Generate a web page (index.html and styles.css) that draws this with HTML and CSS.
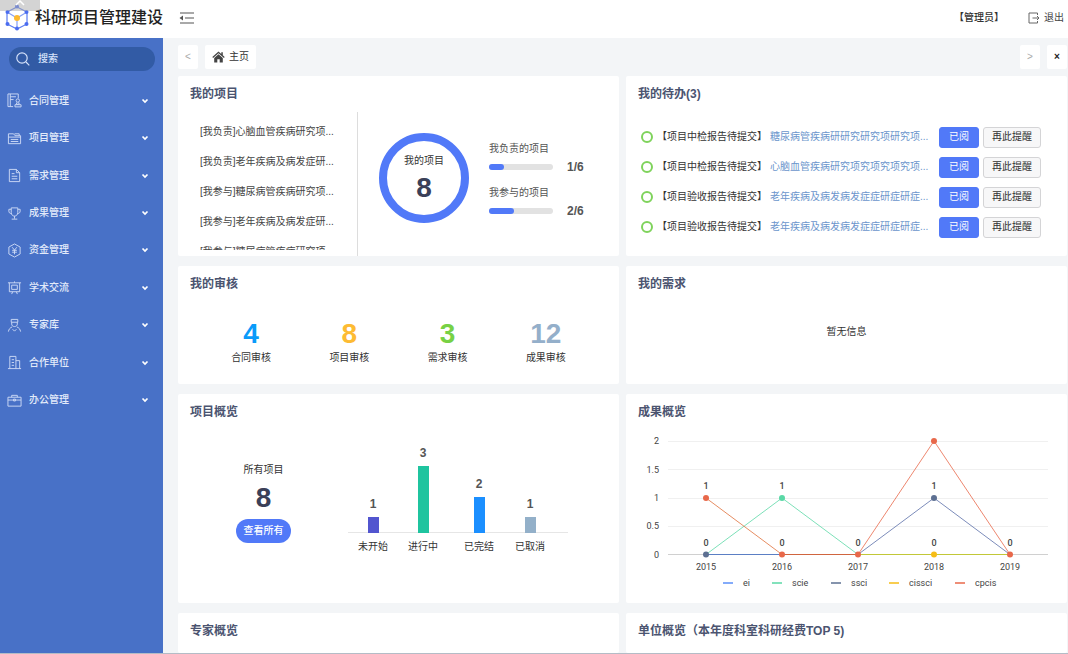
FILE: index.html
```
<!DOCTYPE html>
<html lang="zh-CN">
<head>
    <meta charset="UTF-8">
    <meta name="viewport" content="width=device-width, initial-scale=1.0">
    <title>科研项目管理建设</title>
    <link rel="stylesheet" href="styles.css">
</head>
<body>
    <header class="header">
        <svg class="logo" width="24" height="27" viewBox="0 0 24 27">
            <g fill="none" stroke="#5b7cf0" stroke-width="1.2">
                <path d="M12 3 L22 8 V20 L12 25 L2 20 V8 Z"/>
                <path d="M12 14 V25 M2 8 L12 14 L22 8" stroke="#86a0f5"/>
            </g>
            <g fill="#4a6cf0">
                <circle cx="12" cy="2.5" r="2"/><circle cx="2.5" cy="8" r="2"/><circle cx="21.5" cy="8" r="2"/>
                <circle cx="2.5" cy="20" r="2"/><circle cx="21.5" cy="20" r="2"/><circle cx="12" cy="24.5" r="2"/>
            </g>
            <circle cx="12" cy="14" r="3" fill="#fdb92c"/>
        </svg>
        <h1 class="site-name">科研项目管理建设</h1>
        <button class="icon-button fold" aria-label="收起菜单">
            <svg width="15" height="12" viewBox="0 0 15 12" fill="none" stroke="#555" stroke-width="1.2">
                <path d="M1 1H15 M6 6H15 M1 11H15"/><path d="M4 3.500 L0.500 6 L4 8.500 Z" fill="#555" stroke="none"/>
            </svg>
        </button>
        <span class="user">【管理员】</span>
        <a href="#" class="logout">
            <svg width="12" height="12" viewBox="0 0 12 12" fill="none" stroke="#666" stroke-width="1">
                <path d="M9.500 3V1H1V11H9.500V9 M4.500 6H11 M9 4L11 6L9 8"/>
            </svg>
            退出
        </a>
        <span class="pull-tab">
            <svg width="10" height="6" viewBox="0 0 10 6" fill="none" stroke="#fff" stroke-width="1.500"><path d="M1 5L5 1L9 5"/></svg>
        </span>
    </header>

    <div class="layout">
        <nav class="sidebar">
            <label class="search">
                <svg width="14" height="14" viewBox="0 0 14 14" fill="none" stroke="#d5e2fa" stroke-width="1.2"><circle cx="6" cy="6" r="5.200"/><path d="M10 10L13.300 13.300"/></svg>
                <input type="text" placeholder="搜索" aria-label="搜索">
            </label>
            <ul class="menu">
                <li><a href="#"><svg class="menu-icon" viewBox="0 0 16 16"><path d="M6.500 14.500H1V1H12V5.500 M3.500 4H9.500 M3.500 7H7 M3.500 1V14.500"/><circle cx="11.500" cy="8" r="1.800"/><path d="M10.500 10L10 12H13L12.500 10 M8.500 14.800V12.500H15V14.800Z"/></svg>合同管理<svg class="arrow" viewBox="0 0 8 6"><path d="M1.500 1.500L4 4L6.500 1.500"/></svg></a></li>
                <li><a href="#"><svg class="menu-icon" viewBox="0 0 16 16"><path d="M1.500 13.500V3H7L8.500 5H14.500V13.500Z M1.500 6.500H14.500 M4 9H12 M4 11.200H12 M8 3H13V5"/></svg>项目管理<svg class="arrow" viewBox="0 0 8 6"><path d="M1.500 1.500L4 4L6.500 1.500"/></svg></a></li>
                <li><a href="#"><svg class="menu-icon" viewBox="0 0 16 16"><path d="M2.500 1.500H10L13.500 5V14.500H2.500Z M10 1.500V5H13.500 M5 6H8 M5 8.800H11 M5 11.500H11"/></svg>需求管理<svg class="arrow" viewBox="0 0 8 6"><path d="M1.500 1.500L4 4L6.500 1.500"/></svg></a></li>
                <li><a href="#"><svg class="menu-icon" viewBox="0 0 16 16"><path d="M4.500 2H11.500V7C11.500 12 4.500 12 4.500 7Z M4.500 3.500H2V5.500C2 7 3 8 4.500 8 M11.500 3.500H14V5.500C14 7 13 8 11.500 8 M8 10.800V13.500 M5 14H11"/></svg>成果管理<svg class="arrow" viewBox="0 0 8 6"><path d="M1.500 1.500L4 4L6.500 1.500"/></svg></a></li>
                <li><a href="#"><svg class="menu-icon" viewBox="0 0 16 16"><path d="M8 1L14 4.300V11.700L8 15L2 11.700V4.300Z M5.500 4.500L8 7.500L10.500 4.500 M5.500 7.800H10.500 M5.500 9.800H10.500 M8 7.500V12"/></svg>资金管理<svg class="arrow" viewBox="0 0 8 6"><path d="M1.500 1.500L4 4L6.500 1.500"/></svg></a></li>
                <li><a href="#"><svg class="menu-icon" viewBox="0 0 16 16"><path d="M1 3H15 M2.500 3V12.500H13.500V3 M5 5.500H11V10H5Z M8 1.500V3 M6 12.500L5 15 M10 12.500L11 15"/></svg>学术交流<svg class="arrow" viewBox="0 0 8 6"><path d="M1.500 1.500L4 4L6.500 1.500"/></svg></a></li>
                <li><a href="#"><svg class="menu-icon" viewBox="0 0 16 16"><path d="M4.500 4.500V1.500H11.500V4.500Z M5 4.500V6.500C5 10 11 10 11 6.500V4.500 M5.500 9.500C3 10.500 2 12 1.500 14.500 M10.500 9.500C13 10.500 14 12 14.500 14.500 M6 12L8 14L10 12"/></svg>专家库<svg class="arrow" viewBox="0 0 8 6"><path d="M1.500 1.500L4 4L6.500 1.500"/></svg></a></li>
                <li><a href="#"><svg class="menu-icon" viewBox="0 0 16 16"><path d="M1 14.500H15 M3 14.500V1.500H9.500V14.500 M9.500 6H13.500V14.500 M5 5H7.500 M5 8H7.500 M5 11H7.500"/></svg>合作单位<svg class="arrow" viewBox="0 0 8 6"><path d="M1.500 1.500L4 4L6.500 1.500"/></svg></a></li>
                <li><a href="#"><svg class="menu-icon" viewBox="0 0 16 16"><path d="M1 4.500H15V14H1Z M5 4.500V2.500H11V4.500 M1 7.500H15 M7 6.500H9V8.500H7Z"/></svg>办公管理<svg class="arrow" viewBox="0 0 8 6"><path d="M1.500 1.500L4 4L6.500 1.500"/></svg></a></li>
            </ul>
        </nav>

        <main class="main">
            <div class="tabs">
                <button class="tab-button">&lt;</button>
                <a href="#" class="tab-home">
                    <svg width="13" height="12" viewBox="0 0 13 12" fill="#444"><path d="M6.500 0.500L0.300 6L1.100 6.900L6.500 2.200L11.900 6.900L12.700 6L10.800 4.300V1.300H9.300V3Z"/><path d="M6.500 3.200L2.200 7V11.500H5.300V8.300H7.700V11.500H10.800V7Z"/></svg>
                    主页
                </a>
                <button class="tab-button next">&gt;</button>
                <button class="tab-button close">×</button>
            </div>

            <div class="cards">
                <section class="card">
                    <h2>我的项目</h2>
                    <div class="project-body">
                        <div class="project-list">
                            <ul>
                                <li>[我负责]心脑血管疾病研究项...</li>
                                <li>[我负责]老年疾病及病发症研...</li>
                                <li>[我参与]糖尿病管疾病研究项...</li>
                                <li>[我参与]老年疾病及病发症研...</li>
                                <li>[我参与]糖尿病管疾病研究项...</li>
                            </ul>
                        </div>
                        <div class="ring">
                            <span>我的项目</span>
                            <b class="big-number">8</b>
                        </div>
                        <div class="progress-list">
                            <span>我负责的项目</span>
                            <div class="progress-row">
                                <div class="progress"><div class="progress-bar" style="width: 24%"></div></div>
                                <b>1/6</b>
                            </div>
                            <span>我参与的项目</span>
                            <div class="progress-row">
                                <div class="progress"><div class="progress-bar" style="width: 39%"></div></div>
                                <b>2/6</b>
                            </div>
                        </div>
                    </div>
                </section>

                <section class="card">
                    <h2>我的待办(3)</h2>
                    <ul class="todo">
                        <li><i class="dot"></i><span class="tag">【项目中检报告待提交】</span><a href="#">糖尿病管疾病研研究研究项研究项...</a><button class="btn primary">已阅</button><button class="btn">再此提醒</button></li>
                        <li><i class="dot"></i><span class="tag">【项目中检报告待提交】</span><a href="#">心脑血管疾病研究项究项究项究项...</a><button class="btn primary">已阅</button><button class="btn">再此提醒</button></li>
                        <li><i class="dot"></i><span class="tag">【项目验收报告待提交】</span><a href="#">老年疾病及病发病发症症研症研症...</a><button class="btn primary">已阅</button><button class="btn">再此提醒</button></li>
                        <li><i class="dot"></i><span class="tag">【项目验收报告待提交】</span><a href="#">老年疾病及病发病发症症研症研症...</a><button class="btn primary">已阅</button><button class="btn">再此提醒</button></li>
                    </ul>
                </section>

                <section class="card">
                    <h2>我的审核</h2>
                    <div class="audit">
                        <div><b class="big-number blue">4</b>合同审核</div>
                        <div><b class="big-number orange">8</b>项目审核</div>
                        <div><b class="big-number green">3</b>需求审核</div>
                        <div><b class="big-number gray">12</b>成果审核</div>
                    </div>
                </section>

                <section class="card">
                    <h2>我的需求</h2>
                    <p class="empty">暂无信息</p>
                </section>

                <section class="card">
                    <h2>项目概览</h2>
                    <div class="overview">
                        <div class="total">
                            <span>所有项目</span>
                            <b class="big-number">8</b>
                            <button class="view-all">查看所有</button>
                        </div>
                        <div class="bar-chart">
                            <div class="bars">
                                <div class="bar-col"><b>1</b><div class="bar purple" style="height: 16px"></div></div>
                                <div class="bar-col"><b>3</b><div class="bar teal" style="height: 67px"></div></div>
                                <div class="bar-col"><b>2</b><div class="bar sky" style="height: 36px"></div></div>
                                <div class="bar-col"><b>1</b><div class="bar steel" style="height: 16px"></div></div>
                            </div>
                            <div class="bar-labels">
                                <span>未开始</span><span>进行中</span><span>已完结</span><span>已取消</span>
                            </div>
                        </div>
                    </div>
                </section>

                <section class="card">
                    <h2>成果概览</h2>
                    <svg class="line-chart" viewBox="0 0 417 168">
                        <path class="grid-line" d="M30 16.500H410 M30 44.500H410 M30 73.500H410 M30 101.500H410"/>
                        <path class="axis-line" d="M30 129.500H410"/>
                        <g class="y-labels">
                            <text x="21" y="19">2</text>
                            <text x="21" y="48">1.5</text>
                            <text x="21" y="76">1</text>
                            <text x="21" y="104">0.5</text>
                            <text x="21" y="133">0</text>
                        </g>
                        <g class="lines">
                            <path stroke="#5b7fc4" d="M68 129.500H144"/>
                            <path stroke="#d0653f" d="M144 129.500H220"/>
                            <path stroke="#c2c838" d="M220 129.500H372"/>
                        </g>
                        <g class="thin-lines">
                            <path stroke="#5ad8a6" d="M68 129.500L144 73L220 129.500"/>
                            <path stroke="#5b6fa8" d="M220 129.500L296 73L372 129.500"/>
                            <path stroke="#e0703a" d="M68 73L144 129.500"/>
                            <path stroke="#e8684a" d="M220 129.500L296 16L372 129.500"/>
                        </g>
                        <g class="points">
                            <circle cx="68" cy="73" r="3" fill="#e8684a"/>
                            <circle cx="68" cy="129.500" r="3" fill="#5d7092"/>
                            <circle cx="144" cy="73" r="3" fill="#5ad8a6"/>
                            <circle cx="144" cy="129.500" r="3" fill="#e8684a"/>
                            <circle cx="220" cy="129.500" r="3" fill="#e8684a"/>
                            <circle cx="296" cy="16" r="3" fill="#e8684a"/>
                            <circle cx="296" cy="73" r="3" fill="#5d7092"/>
                            <circle cx="296" cy="129.500" r="3" fill="#f6bd16"/>
                            <circle cx="372" cy="129.500" r="3" fill="#e8684a"/>
                        </g>
                        <g class="point-labels">
                            <text x="68" y="64">1</text>
                            <text x="144" y="64">1</text>
                            <text x="296" y="64">1</text>
                            <text x="68" y="121">0</text>
                            <text x="144" y="121">0</text>
                            <text x="220" y="121">0</text>
                            <text x="296" y="121">0</text>
                            <text x="372" y="121">0</text>
                        </g>
                        <g class="x-labels">
                            <text x="68" y="145">2015</text>
                            <text x="144" y="145">2016</text>
                            <text x="220" y="145">2017</text>
                            <text x="296" y="145">2018</text>
                            <text x="372" y="145">2019</text>
                        </g>
                        <g class="legend">
                            <path stroke="#5b8ff9" d="M85 158H95"/><text x="105" y="161">ei</text>
                            <path stroke="#5ad8a6" d="M134 158H144"/><text x="154" y="161">scie</text>
                            <path stroke="#5d7092" d="M193 158H203"/><text x="213" y="161">ssci</text>
                            <path stroke="#f6bd16" d="M251 158H261"/><text x="271" y="161">cissci</text>
                            <path stroke="#e8684a" d="M317 158H327"/><text x="337" y="161">cpcis</text>
                        </g>
                    </svg>
                </section>

                <section class="card">
                    <h2>专家概览</h2>
                </section>

                <section class="card">
                    <h2>单位概览（本年度科室科研经费TOP 5)</h2>
                </section>
            </div>
        </main>
    </div>
</body>
</html>
```

FILE: styles.css
```
* {
    box-sizing: border-box;
}

body {
    margin: 0;
    min-height: 100vh;
    display: flex;
    flex-direction: column;
    font-family: "Liberation Sans", "Noto Sans CJK SC", sans-serif;
    font-size: 10px;
    line-height: 16px;
    color: #333;
    background: #f3f5f7;
    border-bottom: 1px solid #b4bcc6;
}

h1, h2, p, ul {
    margin: 0;
    padding: 0;
}

ul {
    list-style: none;
}

a {
    color: inherit;
    text-decoration: none;
}

button, input {
    font: inherit;
    border: none;
    padding: 0;
}

button {
    cursor: pointer;
}

/* Header */
.header {
    position: relative;
    display: flex;
    align-items: center;
    height: 38px;
    padding: 0 4px 3px 5px;
    background: #fff;
}

.logo {
    margin-right: 6px;
}

.site-name {
    font-size: 16px;
    font-weight: 500;
    line-height: 24px;
    color: #222;
}

.icon-button {
    display: flex;
    background: none;
}

.fold {
    margin-left: 16px;
}

.user {
    margin-left: auto;
    font-weight: 500;
}

.logout {
    display: flex;
    align-items: center;
    gap: 4px;
    margin-left: 24px;
    color: #444;
}

.pull-tab {
    position: absolute;
    top: 0;
    left: 0;
    display: flex;
    justify-content: center;
    width: 40px;
    height: 11px;
    background: rgba(170, 170, 170, 0.5);
}

/* Sidebar */
.layout {
    flex: 1;
    display: flex;
}

.sidebar {
    flex: none;
    width: 163px;
    padding-top: 9px;
    background: #4871c7;
}

.search {
    display: flex;
    align-items: center;
    gap: 8px;
    height: 24px;
    margin: 0 8px 0 9px;
    padding: 0 7px;
    border-radius: 12px;
    background: #325ba5;
}

.search svg {
    flex: none;
}

.search input {
    width: 100%;
    min-width: 0;
    background: none;
    outline: none;
    color: #fff;
}

.search input::placeholder {
    color: #d5e2fa;
    font-weight: 500;
}

.menu {
    display: flex;
    flex-direction: column;
    height: 348px;
    padding-top: 11px;
}

.menu li {
    flex: 1;
}

.menu a {
    display: flex;
    align-items: center;
    height: 100%;
    padding: 0 14px 0 7px;
    color: #e3ebfa;
    font-weight: 500;
}

.menu-icon {
    width: 15px;
    height: 15px;
    margin-right: 7px;
    fill: none;
    stroke: #cddaf5;
    stroke-width: 1;
}

.arrow {
    width: 8px;
    height: 6px;
    margin-left: auto;
    fill: none;
    stroke: #fff;
    stroke-width: 1.7;
}

/* Tabs */
.main {
    flex: 1;
    min-width: 0;
    display: flex;
    flex-direction: column;
    padding: 7px 1px 0 15px;
}

.tabs {
    display: flex;
    gap: 7px;
    height: 24px;
    margin-bottom: 7px;
}

.tab-button {
    width: 20px;
    border-radius: 2px;
    background: #fff;
    color: #aaa;
}

.tab-home {
    display: flex;
    align-items: center;
    gap: 4px;
    padding: 0 7px;
    border-radius: 2px;
    background: #fff;
}

.next {
    margin-left: auto;
}

.close {
    color: #222;
    font-weight: bold;
}

/* Cards */
.cards {
    flex: 1;
    display: grid;
    grid-template-columns: 1fr 1fr;
    grid-template-rows: 180px 118px 209px 1fr;
    gap: 10px 7px;
}

.card {
    display: flex;
    flex-direction: column;
    min-width: 0;
    padding: 10px 12px 0;
    border-radius: 2px;
    background: #fff;
}

.card h2 {
    font-size: 12px;
    line-height: 16px;
    color: #4b5470;
}

.big-number {
    font-size: 28px;
    line-height: 32px;
    color: #3b4058;
}

.project-body {
    flex: 1;
    display: flex;
    margin-top: 10px;
}

.project-list {
    width: 168px;
    padding: 5px 0 0 10px;
    border-right: 1px solid #ddd;
}

.project-list ul {
    height: 133px;
    overflow: hidden;
}

.project-list li {
    line-height: 30px;
    white-space: nowrap;
    color: #444;
}

.ring {
    display: flex;
    flex-direction: column;
    align-items: center;
    width: 90px;
    height: 90px;
    margin: 21px 20px 0 21px;
    padding-top: 12px;
    border: 8px solid #5179f8;
    border-radius: 50%;
}

.ring .big-number {
    line-height: 38px;
}

.progress-list {
    padding-top: 29px;
    color: #555;
}

.progress-row {
    display: flex;
    align-items: center;
    gap: 14px;
    height: 20px;
    margin-bottom: 8px;
}

.progress-row b {
    font-size: 12px;
}

.progress {
    width: 64px;
    height: 6px;
    border-radius: 3px;
    background: #e2e2e2;
}

.progress-bar {
    height: 100%;
    border-radius: 3px;
    background: #5179f8;
}

/* Todo */
.todo {
    padding-top: 20px;
}

.todo li {
    display: flex;
    align-items: center;
    height: 30px;
    padding-left: 3px;
    white-space: nowrap;
}

.dot {
    width: 12px;
    height: 12px;
    margin-right: 4px;
    border: 2px solid #7fd35c;
    border-radius: 50%;
}

.tag {
    width: 113px;
}

.todo a {
    width: 169px;
    color: #6b95cc;
}

.btn {
    height: 21px;
    padding: 0 8px;
    border: 1px solid #d4d4d6;
    border-radius: 3px;
    background: #f7f7f8;
    color: #333;
}

.btn.primary {
    margin-right: 4px;
    padding: 0 9px;
    border-color: #5179f8;
    background: #5179f8;
    color: #fff;
}

/* Audit */
.audit {
    display: grid;
    grid-template-columns: repeat(4, 1fr);
    padding: 26px 12px 0;
    text-align: center;
}

.audit .big-number {
    display: block;
}

.audit .blue {
    color: #0a9bfa;
}

.audit .orange {
    color: #fdbb33;
}

.audit .green {
    color: #77d145;
}

.audit .gray {
    color: #94afca;
}

.empty {
    padding-top: 32px;
    text-align: center;
}

/* Project overview */
.overview {
    display: flex;
    padding-top: 25px;
}

.total {
    display: flex;
    flex-direction: column;
    align-items: center;
    width: 147px;
    padding-top: 17px;
}

.total .big-number {
    line-height: 40px;
}

.view-all {
    width: 55px;
    height: 24px;
    margin-top: 1px;
    border-radius: 12px;
    background: #5179f8;
    color: #fff;
    font-weight: 500;
}

.bar-chart {
    margin-left: 11px;
    width: 220px;
}

.bars, .bar-labels {
    display: grid;
    grid-template-columns: 50px 50px 62px 40px;
    text-align: center;
}

.bars {
    height: 88px;
    border-bottom: 1px solid #e6e6e6;
}

.bar-col {
    display: flex;
    flex-direction: column;
    align-items: center;
    justify-content: flex-end;
    gap: 5px;
}

.bar-col b {
    font-size: 12px;
    color: #555;
}

.bar {
    width: 11px;
}

.purple {
    background: #5255cf;
}

.teal {
    background: #1fc49f;
}

.sky {
    background: #1b8fff;
}

.steel {
    background: #93b0c9;
}

.bar-labels {
    padding-top: 6px;
}

/* Line chart */
.line-chart {
    display: block;
    width: 100%;
    margin-top: 5px;
    font-family: Roboto, sans-serif;
    font-size: 9px;
    fill: #444;
}

.grid-line {
    stroke: #f0f0f0;
}

.axis-line {
    stroke: #d0d0d0;
}

.lines {
    fill: none;
    stroke-width: 1;
}

.thin-lines {
    fill: none;
    stroke-width: 0.8;
}

.y-labels {
    text-anchor: end;
}

.x-labels, .point-labels {
    text-anchor: middle;
}

.point-labels {
    font-weight: 500;
}

.legend path {
    stroke-width: 1.5;
}
```
